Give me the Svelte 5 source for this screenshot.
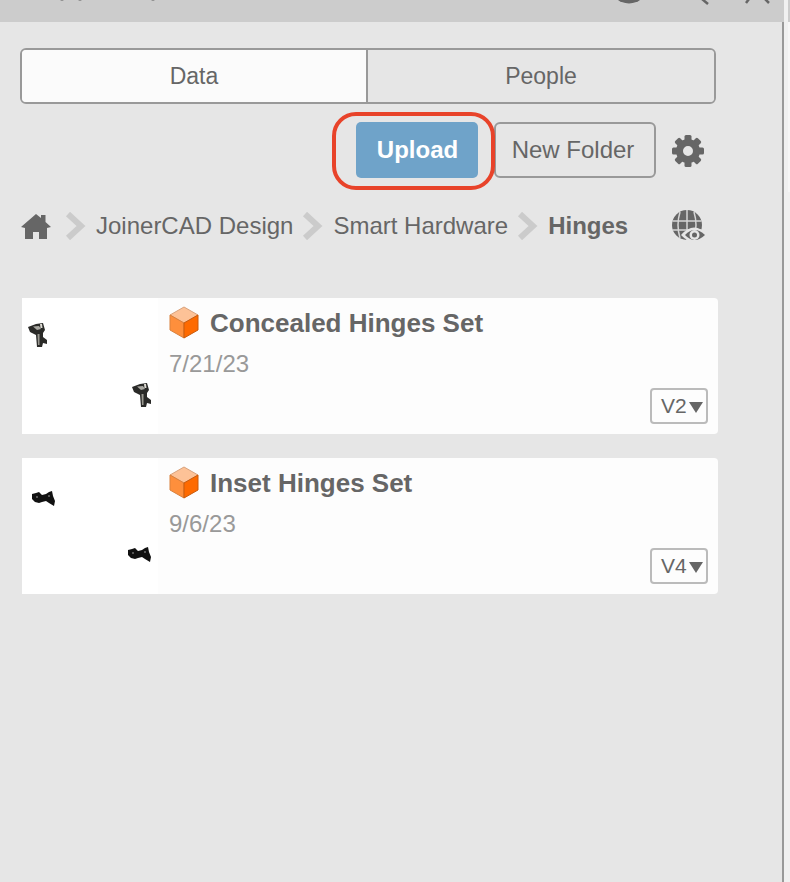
<script>
  const crumbs = ['JoinerCAD Design', 'Smart Hardware'];
  const items = [
    { name: 'Concealed Hinges Set', date: '7/21/23', version: 'V2', kind: 'upright' },
    { name: 'Inset Hinges Set', date: '9/6/23', version: 'V4', kind: 'flat' }
  ];
  const teeth = [0, 45, 90, 135, 180, 225, 270, 315];
</script>

{#snippet chevron()}
  <svg class="chevron" width="21" height="28" viewBox="0 0 21 28">
    <path d="M3 2 L16 14 L3 26" fill="none" stroke="#cbcbcb" stroke-width="6" />
  </svg>
{/snippet}

{#snippet hinge(kind)}
  {#if kind === 'upright'}
    <svg class="part" width="20" height="24" viewBox="0 0 20 24">
      <path d="M0 4 L8 1 L15 0 L17 7 L15 10 L15 14 L19 17 L19 21 L15 20 L14 24 L9 24 L8 12 L2 9 Z" fill="#2a2a28" />
      <path d="M5 3.500 L11 3 L13 6 L9 7 Z" fill="#aaa9a3" />
      <path d="M9.500 11 L11.500 11 L11.500 22 L10 22 Z" fill="#999890" />
      <path d="M12 1 L14 1 L14.500 5 L12.500 5 Z" fill="#dddbd4" />
    </svg>
  {:else}
    <svg class="part" width="23" height="15" viewBox="0 0 23 15">
      <path d="M0 3 L4 2 L7 1 L10 4 L14 3 L17 1 L20 0 L21 5 L23 10 L22 15 L17 12 L14 10 L10 11 L7 12 L3 11 L0 8 Z" fill="#111" />
      <path d="M4 5 L6 5 L6 7 L4 7 Z M16 4 L18 4 L18 6 L16 6 Z" fill="#555" />
    </svg>
  {/if}
{/snippet}

<div class="window">
  <div class="panel">
    <header class="titlebar">
      <svg class="cutoff" width="784" height="8" viewBox="0 0 784 8">
        <g fill="#8f8f8f">
          <circle cx="62" cy="-1" r="2" />
          <circle cx="80" cy="-1" r="2" />
          <circle cx="153" cy="-1" r="2" />
        </g>
        <circle cx="629" cy="-15.500" r="19" fill="#666" />
        <g stroke="#666" stroke-width="2.500" fill="none">
          <path d="M702 -1 L708 4" />
          <path d="M749 -1 L746 3 M765 -1 L769 3" />
        </g>
      </svg>
    </header>

    <div class="content">
      <div class="tabs">
        <button class="tab active">Data</button>
        <button class="tab">People</button>
      </div>

      <div class="toolbar">
        <div class="upload-wrap">
          <button class="upload">Upload</button>
          <span class="callout"></span>
        </div>
        <button class="new-folder">New Folder</button>
        <svg class="gear" width="34" height="34" viewBox="0 0 34 34">
          {#each teeth as a}
            <rect x="13.500" y="1" width="7" height="8" rx="1.500" fill="#666" transform="rotate({a} 17 17)" />
          {/each}
          <circle cx="17" cy="17" r="8.500" fill="none" stroke="#666" stroke-width="7" />
        </svg>
      </div>

      <nav class="crumbs">
        <svg class="home" width="30" height="26" viewBox="0 0 30 26">
          <path d="M0 14 L15 1 L20 5 L20 2 L24.500 2 L24.500 9 L30 14 L26 15 L26 26 L18 26 L18 19 L12 19 L12 26 L4 26 L4 15 Z" fill="#666" />
        </svg>
        {@render chevron()}
        {#each crumbs as name}
          <span class="crumb">{name}</span>
          {@render chevron()}
        {/each}
        <span class="crumb current">Hinges</span>
        <svg class="globe" width="36" height="34" viewBox="0 0 36 34">
          <circle cx="15" cy="15" r="15" fill="#666" />
          <g stroke="#d6d6d6" stroke-width="1.500" fill="none">
            <path d="M0.500 11 H29.500 M0.500 20 H29.500" />
            <path d="M15 0 V30" />
            <path d="M8 2 Q4 15 8 28 M22 2 Q26 15 22 28" />
          </g>
          <path d="M9 25 Q22 10 36 25 Q22 39 9 25 Z" fill="#e6e6e6" />
          <path d="M13 25 Q22.500 15 33 25 Q22.500 35 13 25 Z" fill="#666" />
          <circle cx="22.500" cy="25" r="5" fill="#e6e6e6" />
          <circle cx="22.500" cy="25" r="2.500" fill="#666" />
        </svg>
      </nav>

      <ul class="list">
        {#each items as item}
          <li class="card">
            <div class="thumb">
              <span class="view first {item.kind}">{@render hinge(item.kind)}</span>
              <span class="view second {item.kind}">{@render hinge(item.kind)}</span>
            </div>
            <div class="info">
              <div class="title">
                <svg class="cube" width="30" height="33" viewBox="0 0 30 33">
                  <path d="M15 1 L29 9 L15 17 L1 9 Z" fill="#fdc297" stroke="#d9a27c" stroke-width="1" />
                  <path d="M1 9 L15 17 L15 32 L1 24 Z" fill="#fe8f3c" stroke="#d9813d" stroke-width="1" />
                  <path d="M29 9 L15 17 L15 32 L29 24 Z" fill="#fe6a00" stroke="#c95a0c" stroke-width="1" />
                </svg>
                <span class="name">{item.name}</span>
              </div>
              <div class="date">{item.date}</div>
              <div class="version">
                <span>{item.version}</span>
                <i class="caret"></i>
              </div>
            </div>
          </li>
        {/each}
      </ul>
    </div>
  </div>
  <div class="edge"><div class="edge-top"></div><div class="edge-strip"></div></div>
</div>

<style>
  :global(body) { margin: 0; background: #f0f0f0; }
  .window { display: flex; width: 790px; height: 882px; overflow: hidden; font-family: "Liberation Sans", Arial, sans-serif; color: #666; }
  .panel { display: flex; flex-direction: column; width: 784px; }
  .titlebar { height: 22px; background: #cccccc; overflow: hidden; }
  .cutoff { display: block; }
  .content { flex: 1; overflow: hidden; background: #e6e6e6; border-right: 2px solid #999; }
  .edge { width: 6px; }
  .edge-top { height: 22px; background: linear-gradient(to right, #f0f0f0 4px, #cccccc 4px); }
  .edge-strip { height: 170px; background: linear-gradient(to right, #f0f0f0 4px, #f6f6f6 4px); }

  .tabs { display: flex; box-sizing: border-box; width: 696px; height: 56px; margin: 26px 0 0 20px; border: 2px solid #999; border-radius: 6px; overflow: hidden; }
  .tab { flex: 1; border: 0; padding: 0; background: #e6e6e6; font: inherit; font-size: 23px; color: #666; }
  .tab.active { flex: 0 0 346px; background: #fbfbfb; border-right: 2px solid #999; }

  .toolbar { display: flex; align-items: center; margin: 18px 0 0 356px; height: 56px; }
  .upload-wrap { position: relative; margin-right: 16px; }
  .upload { display: block; width: 122px; height: 56px; border: 0; border-radius: 5px; background: #6fa3c9; color: #fff; font: inherit; font-size: 24px; font-weight: bold; padding: 0 0 0 1px; }
  .callout { position: absolute; left: -24px; top: -10px; width: 163px; height: 78px; box-sizing: border-box; border: 4px solid #e8432a; border-radius: 24px; }
  .new-folder { width: 162px; height: 56px; border: 2px solid #999; border-radius: 6px; background: transparent; color: #666; font: inherit; font-size: 24px; padding: 0 4px 0 0; }
  .gear { margin-left: 15px; margin-top: 1px; }

  .crumbs { display: flex; align-items: center; height: 40px; margin: 28px 0 0 21px; }
  .home { margin-right: 14px; }
  .chevron { margin-right: 10px; }
  .crumb { font-size: 24px; margin-right: 9px; white-space: nowrap; }
  .crumb.current { font-weight: bold; margin: 0; }
  .globe { margin: 0 0 -1px 44px; }

  .list { list-style: none; margin: 52px 0 0 22px; padding: 0; width: 696px; }
  .card { display: flex; height: 136px; margin-bottom: 24px; background: #fdfdfd; border-radius: 0 4px 4px 0; }
  .thumb { position: relative; width: 136px; background: #fff; }
  .view { position: absolute; line-height: 0; }
  .view.upright.first { left: 6px; top: 25px; }
  .view.upright.second { left: 110px; top: 85px; }
  .view.flat.first { left: 10px; top: 33px; }
  .view.flat.second { left: 106px; top: 89px; }
  .info { position: relative; flex: 1; padding: 8px 0 0 11px; }
  .title { display: flex; align-items: center; gap: 11px; font-size: 26px; font-weight: bold; height: 33px; }
  .name { position: relative; top: 1px; }
  .date { margin-top: 11px; font-size: 24px; line-height: 28px; color: #999; }
  .version { position: absolute; right: 10px; bottom: 10px; display: flex; align-items: center; box-sizing: border-box; width: 58px; height: 36px; padding-left: 9px; border: 2px solid #bbb; border-radius: 4px; font-size: 21px; }
  .caret { margin-left: 2px; margin-top: 3px; border-left: 7.500px solid transparent; border-right: 7.500px solid transparent; border-top: 11px solid #666; }
</style>
